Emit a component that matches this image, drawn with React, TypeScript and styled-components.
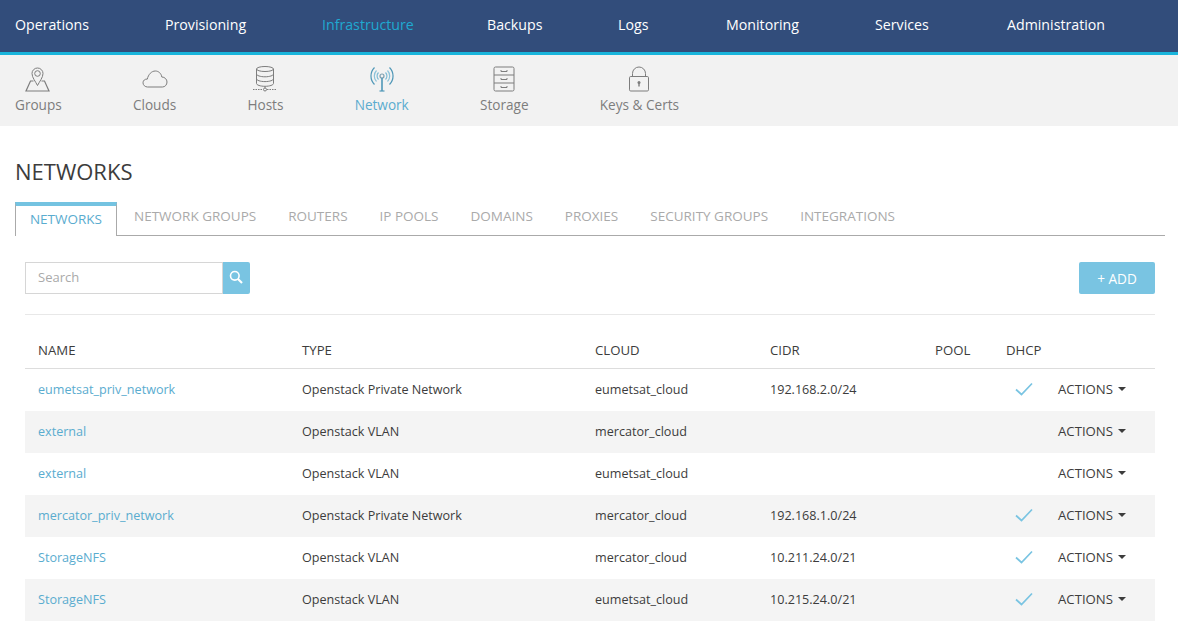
import React from "react";
import styled, { createGlobalStyle } from "styled-components";

const GlobalStyle = createGlobalStyle`
  html, body {
    margin: 0;
    padding: 0;
    height: 100%;
    overflow: hidden;
    background: #fff;
    font-family: "Open Sans", "Liberation Sans", sans-serif;
    color: #3a3a3a;
  }
  * { box-sizing: border-box; }
`;

const TopNav = styled.nav`
  height: 55px;
  background-color: #324d7b;
  border-bottom: 3px solid #19b5dc;
  padding: 0 15px 2px;
  display: grid;
  grid-template-columns: 150px 157px 165px 131px 108px 149px 132px auto;
  align-items: center;
`;

const TopLink = styled.a<{ $active?: boolean }>`
  font-size: 14.2px;
  line-height: 20px;
  color: ${(p) => (p.$active ? "#1fa9d1" : "#fff")};
  white-space: nowrap;
`;

const SubNav = styled.div`
  height: 71px;
  background-color: #f2f2f2;
  padding: 11px 15px 0;
  display: flex;
  gap: 71.2px;
`;

const SubItem = styled.a<{ $active?: boolean }>`
  display: flex;
  flex-direction: column;
  align-items: center;
  font-size: 13.6px;
  line-height: 18px;
  gap: 4px;
  color: ${(p) => (p.$active ? "#5aaccf" : "#7d7d7d")};
  white-space: nowrap;
`;

const IconSlot = styled.span`
  height: 26px;
  display: flex;
  align-items: center;
  justify-content: center;
`;

const Content = styled.main`
  padding: 33px 13px 0 15px;
`;

const Title = styled.h1`
  margin: 0;
  font-weight: 400;
  font-size: 22px;
  line-height: 24px;
  color: #3c3c3c;
`;

const Tabs = styled.div`
  margin-top: 19px;
  height: 34px;
  display: flex;
  gap: 32px;
  border-bottom: 1px solid #aaa;
`;

const ActiveTab = styled.a`
  width: 102px;
  height: 34px;
  margin-right: -15px;
  background: #fff;
  border-top: 4px solid #74c3e1;
  border-left: 1px solid #aaa;
  border-right: 1px solid #aaa;
  color: #5aaccf;
  font-size: 13.5px;
  line-height: 26px;
  text-align: center;
`;

const Tab = styled.a`
  font-size: 13.5px;
  line-height: 28px;
  color: #aaa;
  white-space: nowrap;
`;

const Panel = styled.div`
  padding: 26px 10px 0;
`;

const Toolbar = styled.div`
  display: flex;
  justify-content: space-between;
  padding-bottom: 20px;
  border-bottom: 1px solid #e8e8e8;
`;

const SearchBox = styled.div`
  display: flex;
  width: 225px;
  height: 32px;
`;

const SearchField = styled.input`
  flex: 1;
  min-width: 0;
  padding: 0 12px 2px;
  border: 1px solid #d6d6d6;
  border-right: none;
  font: inherit;
  font-size: 13px;
  outline: none;
  &::placeholder {
    color: #aaa;
    opacity: 1;
  }
`;

const SearchButton = styled.button`
  width: 28px;
  border: none;
  padding: 0 1px 2px 0;
  background: #79c4e2;
  border-radius: 0 2px 2px 0;
  border-left: 1px solid #d6d6d6;
  display: flex;
  align-items: center;
  justify-content: center;
`;

const AddButton = styled.button`
  width: 76px;
  height: 32px;
  border: none;
  border-radius: 2px;
  background: #79c4e2;
  color: #fff;
  font: inherit;
  font-size: 13.6px;
`;

const Table = styled.table`
  width: 100%;
  table-layout: fixed;
  border-collapse: separate;
  border-spacing: 0;
  margin-top: 18px;
`;

const Col = styled.col<{ $w?: number }>`
  width: ${(p) => (p.$w ? `${p.$w}px` : "auto")};
`;

const HeadCell = styled.th`
  height: 36px;
  padding: 0 0 2px 13px;
  text-align: left;
  font-weight: 400;
  font-size: 13.2px;
  color: #3c3c3c;
  border-bottom: 1px solid #ddd;
`;

const Row = styled.tr`
  height: 42px;
  &:nth-child(even) {
    background: #f4f4f4;
  }
`;

const Cell = styled.td`
  padding: 0 0 2px 13px;
  font-size: 12.6px;
  color: #3c3c3c;
  white-space: nowrap;
`;

const NameLink = styled.a`
  color: #5aaccf;
`;

const Actions = styled.span`
  display: inline-flex;
  align-items: center;
  gap: 5px;
  font-size: 13.2px;
  &::after {
    content: "";
    border-left: 4px solid transparent;
    border-right: 4px solid transparent;
    border-top: 4px solid #3c3c3c;
  }
`;

const Check = styled.svg`
  display: block;
  margin-left: 9px;
`;

const CheckIcon = () => (
  <Check width="18" height="14" viewBox="0 0 18 14" fill="none">
    <path d="M1 7.5 6.5 12.5 17 1.5" stroke="#79c4e2" strokeWidth="1.7" />
  </Check>
);

const GroupsIcon = () => (
  <svg width="26" height="25" viewBox="0 0 26 25" fill="none" stroke="#7d7d7d" strokeWidth="1">
    <path d="M12.5 18.5C10.5 14.500 7 10.500 7 6.500a5.500 5.500 0 0 1 11 0c0 4-3.500 8-5.500 12Z" />
    <circle cx="12.5" cy="6.500" r="2.800" />
    <path d="M8.500 14H5.500L1 24h23l-4.500-10h-3" strokeWidth="1.200" />
  </svg>
);

const CloudsIcon = () => (
  <svg width="26" height="18" viewBox="0 0 26 18" fill="none" stroke="#7d7d7d" strokeWidth="1">
    <path d="M5.500 17C3 17 1 15 1 12.800 1 10.500 3 8.800 5.300 9.100 6.300 4.500 9.500 1 13.300 1c3.400 0 6 2.600 6.500 6 2.900 0 5.200 2.300 5.200 5 0 2.800-2 5-4.600 5Z" />
  </svg>
);

const HostsIcon = () => (
  <svg width="24" height="26" viewBox="0 0 24 26" fill="none" stroke="#7d7d7d" strokeWidth="1">
    <ellipse cx="12" cy="3" rx="8.500" ry="2.500" />
    <path d="M3.500 3v14.500c0 1.500 3.800 2.800 8.500 2.800s8.500-1.300 8.500-2.800V3" />
    <path d="M3.500 8c0 1.500 3.800 2.800 8.500 2.800S20.500 9.500 20.500 8M3.500 12.800c0 1.500 3.800 2.800 8.500 2.800s8.500-1.300 8.500-2.800" />
    <circle cx="12" cy="23.500" r="1.500" />
    <path d="M12 20.500V22" />
    <path d="M0 23.500h10M14 23.500h10" strokeDasharray="1.500 1" />
  </svg>
);

const NetworkIcon = () => (
  <svg width="26" height="26" viewBox="0 0 26 26" fill="none" stroke="#4f97b7" strokeWidth="1.200">
    <circle cx="13" cy="10" r="2" stroke="#7c9fb0" />
    <path d="M13 12v13" strokeWidth="1.600" />
    <path d="M10.500 25h5" />
    <path d="M9.500 6.500a5 5 0 0 0 0 7M16.500 6.500a5 5 0 0 1 0 7" stroke="#7fbcd6" />
    <path d="M7.500 4.500a8 8 0 0 0 0 11M18.500 4.500a8 8 0 0 1 0 11" stroke="#8cc3da" />
    <path d="M5.500 1.500a12 12 0 0 0 0 17M20.500 1.500a12 12 0 0 1 0 17" />
  </svg>
);

const StorageIcon = () => (
  <svg width="22" height="26" viewBox="0 0 22 26" fill="none" stroke="#7d7d7d" strokeWidth="1">
    <rect x="1" y="1" width="20" height="24" rx="1.500" />
    <path d="M1 9h20M1 17h20M8 4v1.500h6V4M8 12v1.500h6V12M8 20v1.500h6V20" />
  </svg>
);

const LockIcon = () => (
  <svg width="22" height="26" viewBox="0 0 22 26" fill="#7d7d7d" stroke="none">
    <rect x="1.500" y="10.500" width="19" height="14.500" rx="1.200" fill="none" stroke="#7d7d7d" />
    <path d="M4.500 10.500V7.500a6.500 6.500 0 0 1 13 0v3" fill="none" stroke="#7d7d7d" />
    <circle cx="11" cy="16.500" r="1.500" />
    <rect x="10.300" y="17" width="1.400" height="3.500" />
  </svg>
);

const SearchIcon = () => (
  <svg width="14" height="14" viewBox="0 0 14 14" fill="none" stroke="#fff">
    <circle cx="5.800" cy="5.800" r="4.300" strokeWidth="1.600" />
    <path d="M9 9l4 4" strokeWidth="2.200" />
  </svg>
);

const topLinks = ["Operations", "Provisioning", "Infrastructure", "Backups", "Logs", "Monitoring", "Services", "Administration"];

const subLinks = [
  { label: "Groups", icon: <GroupsIcon /> },
  { label: "Clouds", icon: <CloudsIcon /> },
  { label: "Hosts", icon: <HostsIcon /> },
  { label: "Network", icon: <NetworkIcon /> },
  { label: "Storage", icon: <StorageIcon /> },
  { label: "Keys & Certs", icon: <LockIcon /> },
];

const tabs = ["NETWORK GROUPS", "ROUTERS", "IP POOLS", "DOMAINS", "PROXIES", "SECURITY GROUPS", "INTEGRATIONS"];

const rows = [
  { name: "eumetsat_priv_network", type: "Openstack Private Network", cloud: "eumetsat_cloud", cidr: "192.168.2.0/24", dhcp: true },
  { name: "external", type: "Openstack VLAN", cloud: "mercator_cloud", cidr: "", dhcp: false },
  { name: "external", type: "Openstack VLAN", cloud: "eumetsat_cloud", cidr: "", dhcp: false },
  { name: "mercator_priv_network", type: "Openstack Private Network", cloud: "mercator_cloud", cidr: "192.168.1.0/24", dhcp: true },
  { name: "StorageNFS", type: "Openstack VLAN", cloud: "mercator_cloud", cidr: "10.211.24.0/21", dhcp: true },
  { name: "StorageNFS", type: "Openstack VLAN", cloud: "eumetsat_cloud", cidr: "10.215.24.0/21", dhcp: true },
];

const App: React.FC = () => {
  return (
    <>
      <GlobalStyle />
      <TopNav>
        {topLinks.map((link) => (
          <TopLink key={link} $active={link === "Infrastructure"}>
            {link}
          </TopLink>
        ))}
      </TopNav>
      <SubNav>
        {subLinks.map((item) => (
          <SubItem key={item.label} $active={item.label === "Network"}>
            <IconSlot>{item.icon}</IconSlot>
            {item.label}
          </SubItem>
        ))}
      </SubNav>
      <Content>
        <Title>NETWORKS</Title>
        <Tabs>
          <ActiveTab>NETWORKS</ActiveTab>
          {tabs.map((tab) => (
            <Tab key={tab}>{tab}</Tab>
          ))}
        </Tabs>
        <Panel>
          <Toolbar>
            <SearchBox>
              <SearchField placeholder="Search" />
              <SearchButton>
                <SearchIcon />
              </SearchButton>
            </SearchBox>
            <AddButton>+ ADD</AddButton>
          </Toolbar>
          <Table>
            <colgroup>
              <Col $w={264} />
              <Col $w={293} />
              <Col $w={175} />
              <Col $w={165} />
              <Col $w={71} />
              <Col $w={52} />
              <Col />
            </colgroup>
            <thead>
              <tr>
                <HeadCell>NAME</HeadCell>
                <HeadCell>TYPE</HeadCell>
                <HeadCell>CLOUD</HeadCell>
                <HeadCell>CIDR</HeadCell>
                <HeadCell>POOL</HeadCell>
                <HeadCell>DHCP</HeadCell>
                <HeadCell />
              </tr>
            </thead>
            <tbody>
              {rows.map((row, i) => (
                <Row key={i}>
                  <Cell>
                    <NameLink>{row.name}</NameLink>
                  </Cell>
                  <Cell>{row.type}</Cell>
                  <Cell>{row.cloud}</Cell>
                  <Cell>{row.cidr}</Cell>
                  <Cell />
                  <Cell>{row.dhcp && <CheckIcon />}</Cell>
                  <Cell>
                    <Actions>ACTIONS</Actions>
                  </Cell>
                </Row>
              ))}
            </tbody>
          </Table>
        </Panel>
      </Content>
    </>
  );
};

export default App;
